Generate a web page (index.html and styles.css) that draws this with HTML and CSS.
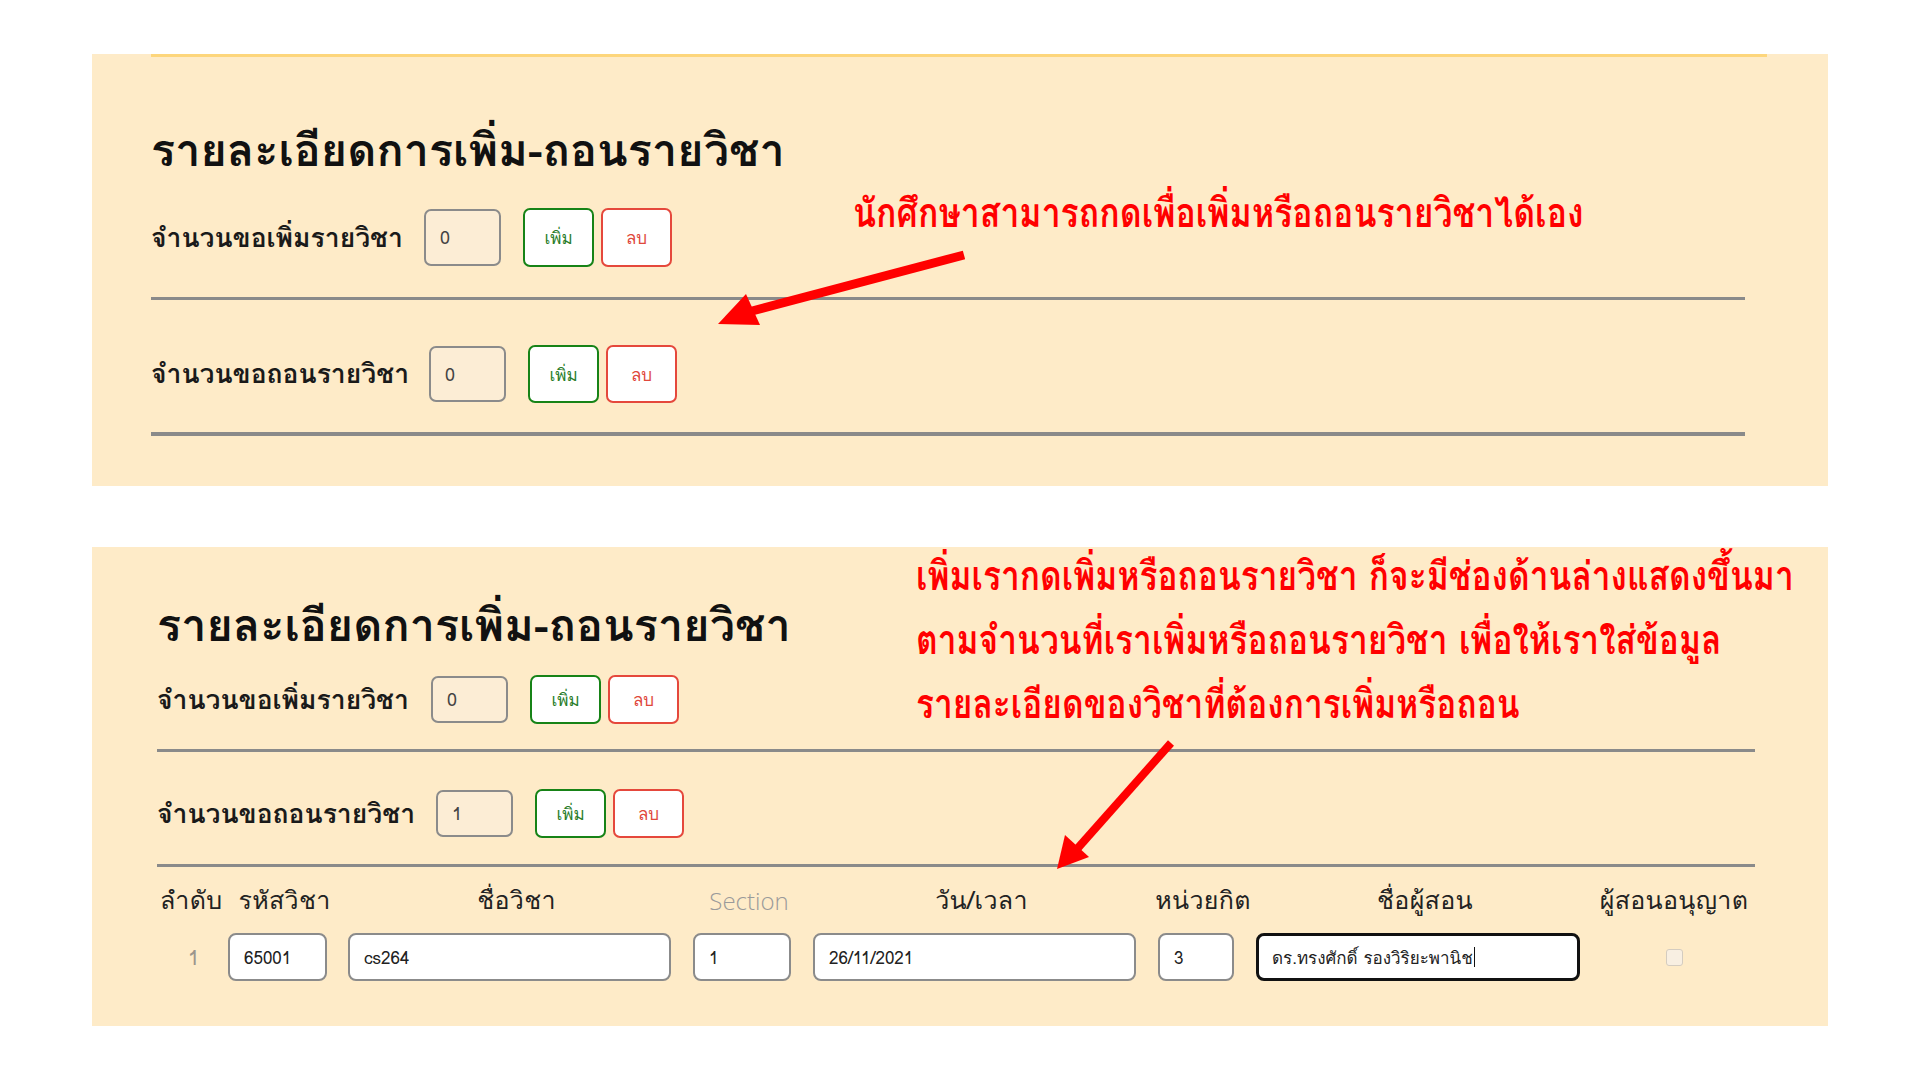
FILE: index.html
```html
<!DOCTYPE html>
<html lang="th">
<head>
<meta charset="utf-8">
<title>รายละเอียดการเพิ่ม-ถอนรายวิชา</title>
<link rel="stylesheet" href="styles.css">
</head>
<body>
<div class="page">
  <section class="panel panel-a">
    <div class="topbar"></div>
    <h1 class="title">รายละเอียดการเพิ่ม-ถอนรายวิชา</h1>
    <div class="row row-a1">
      <span class="label label-a1">จำนวนขอเพิ่มรายวิชา</span>
      <div class="count">0</div>
      <button class="btn btn-add">เพิ่ม</button>
      <button class="btn btn-del">ลบ</button>
    </div>
    <div class="rule rule-a1"></div>
    <div class="row row-a2">
      <span class="label label-a2">จำนวนขอถอนรายวิชา</span>
      <div class="count">0</div>
      <button class="btn btn-add">เพิ่ม</button>
      <button class="btn btn-del">ลบ</button>
    </div>
    <div class="rule rule-a2"></div>
    <p class="note note-a">นักศึกษาสามารถกดเพื่อเพิ่มหรือถอนรายวิชาได้เอง</p>
    <svg class="arrow arrow-a" width="260" height="90" viewBox="0 0 260 90">
      <line x1="252" y1="8" x2="40" y2="64" stroke="#ff0000" stroke-width="9"/>
      <polygon points="6,77 34,47 48,78" fill="#ff0000"/>
    </svg>
  </section>

  <section class="panel panel-b">
    <h1 class="title">รายละเอียดการเพิ่ม-ถอนรายวิชา</h1>
    <div class="row row-b1">
      <span class="label label-b1">จำนวนขอเพิ่มรายวิชา</span>
      <div class="count">0</div>
      <button class="btn btn-add">เพิ่ม</button>
      <button class="btn btn-del">ลบ</button>
    </div>
    <div class="rule rule-b1"></div>
    <div class="row row-b2">
      <span class="label label-b2">จำนวนขอถอนรายวิชา</span>
      <div class="count">1</div>
      <button class="btn btn-add">เพิ่ม</button>
      <button class="btn btn-del">ลบ</button>
    </div>
    <div class="rule rule-b2"></div>
    <div class="grid grid-head">
      <div class="th th-no">ลำดับ</div>
      <div class="th w-code">รหัสวิชา</div>
      <div class="th w-wide">ชื่อวิชา</div>
      <div class="th w-sec th-sec">Section</div>
      <div class="th w-wide">วัน/เวลา</div>
      <div class="th w-credit">หน่วยกิต</div>
      <div class="th w-wide2">ชื่อผู้สอน</div>
      <div class="th th-ok">ผู้สอนอนุญาต</div>
    </div>
    <div class="grid grid-row">
      <div class="td-no">1</div>
      <div class="field w-code">65001</div>
      <div class="field w-wide">cs264</div>
      <div class="field w-sec">1</div>
      <div class="field w-wide">26/11/2021</div>
      <div class="field w-credit">3</div>
      <div class="field w-wide2 focused">ดร.ทรงศักดิ์ รองวิริยะพานิช<span class="caret"></span></div>
      <div class="td-ok"><span class="checkbox"></span></div>
    </div>
    <div class="note note-b">
      <p>เพิ่มเรากดเพิ่มหรือถอนรายวิชา ก็จะมีช่องด้านล่างแสดงขึ้นมา</p>
      <p>ตามจำนวนที่เราเพิ่มหรือถอนรายวิชา เพื่อให้เราใส่ข้อมูล</p>
      <p>รายละเอียดของวิชาที่ต้องการเพิ่มหรือถอน</p>
    </div>
    <svg class="arrow arrow-b" width="130" height="140" viewBox="0 0 130 140">
      <line x1="120" y1="4" x2="26" y2="110" stroke="#ff0000" stroke-width="8"/>
      <polygon points="6,130 14,96 38,118" fill="#ff0000"/>
    </svg>
  </section>
</div>
</body>
</html>
```

FILE: styles.css
```css
* { box-sizing: border-box; }
html, body { margin: 0; padding: 0; background: #ffffff; }
body {
  font-family: "Tahoma", "Loma", "Garuda", "Noto Sans Thai Looped", "Noto Sans Thai", "Noto Sans", "DejaVu Sans", sans-serif;
  color: #1a1a1a;
  overflow: hidden;
}
.page {
  display: flex;
  flex-direction: column;
  gap: 61px;
  padding: 54px 0 0 92px;
}
.panel {
  position: relative;
  width: 1736px;
  background: #feebc8;
  display: flex;
  flex-direction: column;
}
.panel-a { height: 432px; padding-left: 59px; }
.panel-b { height: 479px; padding-left: 65px; }

.topbar {
  width: 1616px;
  height: 3px;
  background: #fdd67c;
}
.title {
  margin: 0;
  font-size: 45px;
  line-height: 52px;
  font-weight: 700;
  color: #111;
  white-space: nowrap;
}
.panel-a .title { margin-top: 67px; }
.panel-b .title { margin-top: 52px; }

.row {
  display: flex;
  align-items: center;
}
.label {
  font-size: 26.5px;
  font-weight: 700;
  color: #1a1a1a;
  white-space: nowrap;
}
.row-a1 { margin-top: 33px; height: 57px; }
.row-a2 { margin-top: 46px; height: 56px; }
.label-a1 { width: 273px; }
.label-a2 { width: 278px; }
.row-b1 { margin-top: 25px; height: 47px; }
.row-b2 { margin-top: 38px; height: 47px; }
.label-b1 { width: 274px; }
.label-b2 { width: 279px; }

.count {
  width: 77px;
  height: 100%;
  border: 2px solid #8b8b8b;
  border-radius: 7px;
  background: #fcedd5;
  font-size: 18px;
  color: #444;
  display: flex;
  align-items: center;
  padding-left: 14px;
}
.btn {
  width: 71px;
  height: calc(100% + 2px);
  background: #ffffff;
  border-radius: 7px;
  font-family: inherit;
  font-size: 17px;
  padding: 0;
  display: flex;
  align-items: center;
  justify-content: center;
}
.btn-add {
  margin-left: 22px;
  border: 2px solid #178317;
  color: #2b7d2b;
}
.btn-del {
  margin-left: 7px;
  border: 2px solid #e5483c;
  color: #e0483c;
}

.rule { background: #8a8a8a; }
.rule-a1 { margin-top: 31px; height: 3px; width: 1594px; }
.rule-a2 { margin-top: 30px; height: 4px; width: 1594px; }
.rule-b1 { margin-top: 26px; height: 3px; width: 1598px; }
.rule-b2 { margin-top: 27px; height: 3px; width: 1598px; }

.grid {
  display: grid;
  grid-template-columns: 71px 120px 345px 120px 345px 98px 344px 148px;
  align-items: center;
}
.grid-head { margin-top: 13px; height: 34px; }
.grid-row { margin-top: 19px; height: 48px; }

.th {
  font-size: 25px;
  letter-spacing: 0.3px;
  color: #222;
  display: flex;
  justify-content: center;
  padding-left: 14px;
  white-space: nowrap;
}
.th-no { justify-content: flex-start; padding-left: 3px; }
.th-sec { color: #9a9a9a; font-family: "Open Sans", "Noto Sans", sans-serif; font-weight: 300; font-size: 24px; letter-spacing: 0; }
.th-ok { padding-left: 0; }
.w-code { width: 99px; }
.w-wide { width: 323px; }
.w-sec { width: 98px; }
.w-credit { width: 76px; }
.w-wide2 { width: 324px; }

.td-no {
  text-align: center;
  color: #9c958c;
  font-size: 21px;
  padding-left: 2px;
}
.field {
  height: 48px;
  border: 2px solid #8b8b8b;
  border-radius: 8px;
  background: #ffffff;
  font-size: 17px;
  color: #222;
  display: flex;
  align-items: center;
  padding-left: 14px;
  white-space: nowrap;
}
.field.focused {
  border: 3px solid #111;
  padding-left: 13px;
}
.caret {
  display: inline-block;
  width: 1px;
  height: 20px;
  background: #111;
  margin-left: 1px;
}
.td-ok { display: flex; justify-content: center; }
.checkbox {
  width: 17px;
  height: 17px;
  border: 1px solid #d4ccc0;
  border-radius: 3px;
  background: #f8efe2;
}

.note {
  position: absolute;
  margin: 0;
  color: #ff0000;
  font-weight: 700;
  white-space: nowrap;
  transform-origin: left top;
}
.note-a {
  left: 761px;
  top: 137px;
  font-size: 40px;
  line-height: 44px;
  transform: scaleX(0.845);
}
.note-b {
  left: 824px;
  top: -3px;
  font-size: 40px;
  line-height: 64px;
  transform: scaleX(0.837);
}
.note-b p { margin: 0; }
.arrow { position: absolute; }
.arrow-a { left: 620px; top: 193px; }
.arrow-b { left: 959px; top: 192px; }
```
